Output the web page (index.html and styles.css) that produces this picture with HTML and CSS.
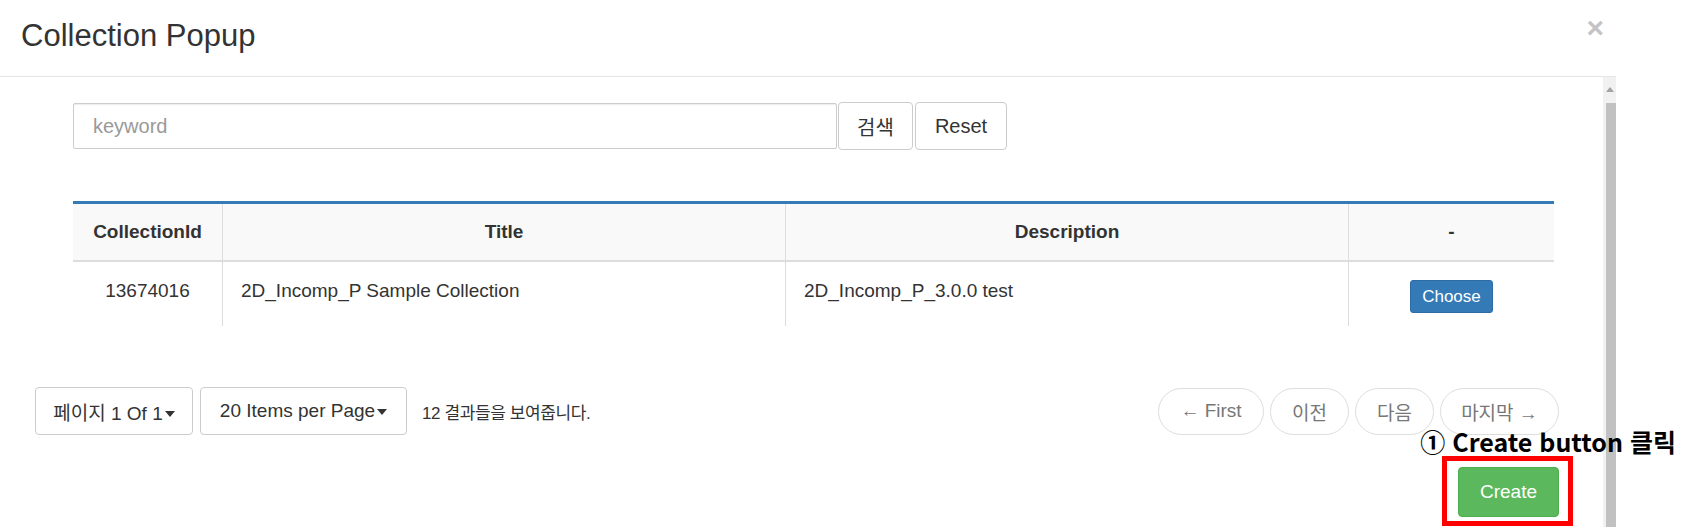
FILE: index.html
```html
<!DOCTYPE html>
<html lang="ko">
<head>
<meta charset="utf-8">
<title>Collection Popup</title>
<link rel="stylesheet" href="styles.css">
</head>
<body>
<div class="modal">
  <div class="modal-header">
    <h4 class="modal-title">Collection Popup</h4>
    <span class="close">×</span>
  </div>
  <div class="modal-main">
    <div class="modal-body">
      <div class="inner">
        <div class="search">
          <input class="search-input" type="text" placeholder="keyword">
          <button class="btn btn-search">검색</button>
          <button class="btn btn-reset">Reset</button>
        </div>
        <table class="grid">
          <colgroup>
            <col class="c-id"><col class="c-title"><col class="c-desc"><col class="c-act">
          </colgroup>
          <thead>
            <tr><th>CollectionId</th><th>Title</th><th>Description</th><th>-</th></tr>
          </thead>
          <tbody>
            <tr>
              <td class="center">13674016</td>
              <td>2D_Incomp_P Sample Collection</td>
              <td>2D_Incomp_P_3.0.0 test</td>
              <td class="center"><button class="btn-choose">Choose</button></td>
            </tr>
          </tbody>
        </table>
      </div>
      <div class="paging">
        <div class="paging-left">
          <button class="btn btn-drop btn-page">페이지 1 Of 1<span class="caret"></span></button>
          <button class="btn btn-drop btn-items">20 Items per Page<span class="caret"></span></button>
          <span class="count">12 결과들을 보여줍니다.</span>
        </div>
        <div class="pager">
          <span class="pill pill-first">← First</span>
          <span class="pill pill-mid">이전</span>
          <span class="pill pill-mid">다음</span>
          <span class="pill pill-last">마지막 →</span>
        </div>
      </div>
      <div class="footer">
        <div class="create-wrap">
          <button class="btn-create">Create</button>
          <span class="highlight"></span>
          <span class="note">① Create button 클릭</span>
        </div>
      </div>
    </div>
    <div class="scrollbar">
      <span class="sb-arrow"></span>
      <span class="sb-thumb"></span>
    </div>
  </div>
</div>
</body>
</html>
```
FILE: styles.css
```css
* { box-sizing: border-box; }
html, body { margin: 0; padding: 0; background: #fff; }
body {
  font-family: "Liberation Sans", "Noto Sans CJK KR", Arial, sans-serif;
  color: #333;
  overflow: hidden;
}
.modal { width: 1616px; background: #fff; }

.modal-header {
  height: 77px;
  border-bottom: 1px solid #e5e5e5;
  display: flex;
  justify-content: space-between;
  align-items: flex-start;
  padding: 0 12px 0 21px;
}
.modal-title {
  margin: 18px 0 0;
  font-size: 31px;
  line-height: 36px;
  font-weight: normal;
  color: #333;
}
.close {
  margin-top: 10px;
  font-size: 30px;
  line-height: 36px;
  font-weight: bold;
  color: #c4c4c4;
}

.modal-main { display: flex; }
.modal-body {
  flex: 1;
  position: relative;
  padding: 25px 44px 0 35px;
  height: 450px;
}
.inner { margin: 0 5px 0 38px; }

.search { display: flex; align-items: center; }
.search-input {
  width: 764px;
  height: 46px;
  border: 1px solid #ccc;
  border-radius: 2px;
  box-shadow: inset 0 1px 1px rgba(0,0,0,.075);
  padding: 0 19px;
  font-family: inherit;
  font-size: 20px;
  color: #555;
  outline: none;
}
.search-input::placeholder { color: #999; }
.btn {
  font-family: inherit;
  background: #fff;
  border: 1px solid #ccc;
  border-radius: 4px;
  color: #333;
  font-size: 20px;
  padding: 0;
}
.btn-search { width: 75px; height: 48px; margin-left: 1px; }
.btn-reset { width: 92px; height: 48px; margin-left: 2px; }

.grid {
  margin-top: 51px;
  width: 100%;
  table-layout: fixed;
  border-collapse: separate;
  border-spacing: 0;
  border-top: 3px solid #337ab7;
  font-size: 19px;
}
.c-id { width: 149px; }
.c-title { width: 563px; }
.c-desc { width: 563px; }
.c-act { width: auto; }
.grid th {
  background: #f9f9f9;
  font-weight: bold;
  text-align: center;
  vertical-align: middle;
  border-bottom: 2px solid #ddd;
  padding: 0 8px;
}
.grid thead tr { height: 58px; }
.grid tbody tr { height: 64px; }
.grid th + th, .grid td + td { border-left: 1px solid #ddd; }
.grid td {
  vertical-align: top;
  padding: 15px 18px 0;
  line-height: 28px;
}
.grid td.center { text-align: center; padding-left: 8px; padding-right: 8px; }
.btn-choose {
  margin-top: 3px;
  width: 83px;
  height: 33px;
  background: #337ab7;
  border: 1px solid #2e6da4;
  border-radius: 3px;
  color: #fff;
  font-family: inherit;
  font-size: 17px;
  padding: 0;
  vertical-align: top;
}

.paging {
  margin-top: 61px;
  display: flex;
  justify-content: space-between;
  align-items: center;
}
.paging-left { display: flex; align-items: center; }
.btn-drop { height: 48px; font-size: 19px; }
.btn-page { width: 158px; }
.btn-items { width: 207px; margin-left: 7px; }
.caret {
  display: inline-block;
  width: 0; height: 0;
  margin-left: 2px;
  vertical-align: middle;
  border-top: 6px solid #333;
  border-left: 5px solid transparent;
  border-right: 5px solid transparent;
}
.count {
  margin-left: 15px;
  font-size: 17px;
  color: #333;
  letter-spacing: -0.4px;
}
.pager { display: flex; gap: 6px; }
.pill {
  display: flex;
  align-items: center;
  justify-content: center;
  height: 47px;
  border: 1px solid #ddd;
  border-radius: 24px;
  background: #fff;
  color: #777;
  font-size: 19px;
}
.pill-first { width: 106px; }
.pill-mid { width: 79px; }
.pill-last { width: 119px; }

.footer {
  margin-top: 32px;
  display: flex;
  justify-content: flex-end;
}
.create-wrap { position: relative; }
.btn-create {
  display: block;
  width: 101px;
  height: 50px;
  background: #5cb85c;
  border: 1px solid #4cae4c;
  border-radius: 4px;
  color: #fff;
  font-family: inherit;
  font-size: 19px;
  padding: 0;
}
.highlight {
  position: absolute;
  top: -11px; left: -16px; right: -14px; bottom: -9px;
  border: 5px solid #ff0000;
}
.note {
  position: absolute;
  right: -117px;
  bottom: calc(100% + 10px);
  white-space: nowrap;
  font-family: "Noto Sans CJK KR", sans-serif;
  font-weight: 700;
  font-size: 25px;
  line-height: 32px;
  color: #000;
}

.scrollbar {
  width: 13px;
  background: #f1f1f1;
  display: flex;
  flex-direction: column;
  align-items: flex-end;
  height: 450px;
}
.sb-arrow {
  margin: 10px 2px 0 0;
  width: 0; height: 0;
  border-bottom: 5px solid #a3a3a3;
  border-left: 4px solid transparent;
  border-right: 4px solid transparent;
}
.sb-thumb {
  margin-top: 11px;
  width: 10px;
  flex: 1;
  background: #c1c1c1;
}
```
